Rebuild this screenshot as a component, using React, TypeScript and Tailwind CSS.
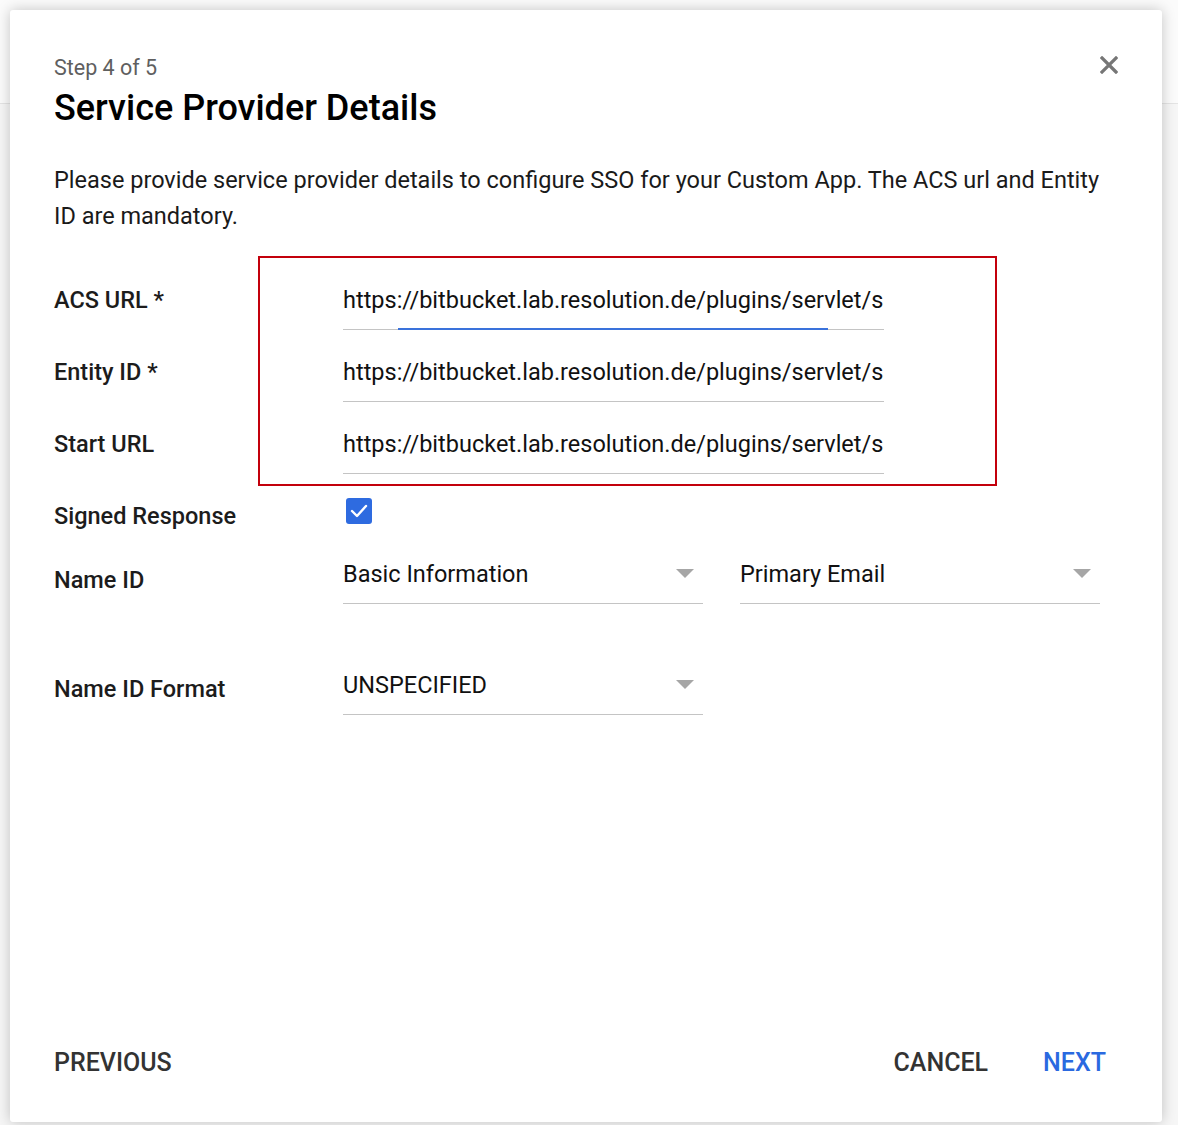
import React from 'react';

const URL_VALUE = 'https://bitbucket.lab.resolution.de/plugins/servlet/samlsso';

const TextRow: React.FC<{ label: string; value: string; focused?: boolean }> = ({ label, value, focused }) => (
  <div className="flex h-[72px] items-start">
    <div className="w-[289px] pt-[18px] text-[23.5px] leading-[36px] font-medium text-[#1c1c1c]">{label}</div>
    <div className="relative w-[541px] pt-[18px] pb-[11px] border-b border-[#c4c4c4]">
      <div className="h-[36px] overflow-hidden whitespace-nowrap text-[23.5px] leading-[36px] text-[#111]">{value}</div>
      {focused && <div className="absolute left-[55px] bottom-[-1px] w-[430px] h-[2px] bg-[#3a72db]" />}
    </div>
  </div>
);

const Arrow = () => (
  <svg width="18" height="10" viewBox="0 0 18 10" className="shrink-0">
    <path d="M0 0 L18 0 L9 9 Z" fill="#a6a6a6" />
  </svg>
);

const Select: React.FC<{ value: string }> = ({ value }) => (
  <div className="flex w-[360px] items-center justify-between pr-[9px] pb-[11px] border-b border-[#c4c4c4]">
    <span className="text-[23.5px] leading-[36px] text-[#111]">{value}</span>
    <Arrow />
  </div>
);

export default function App() {
  return (
    <div className="relative h-[1125px] w-full bg-[#f6f6f6] font-['Roboto',_'Liberation_Sans',_sans-serif] overflow-hidden">
      {/* page behind the dialog */}
      <div className="h-[104px] border-b border-[#e4e4e4] bg-[#fbfbfb]" />

      <div className="absolute left-[10px] top-[10px] flex h-[1112px] w-[1152px] flex-col rounded-[3px] bg-white px-[44px] shadow-[0_0_14px_rgba(0,0,0,0.22)]">
        {/* close */}
        <button className="absolute right-[44px] top-[46px] p-0">
          <svg width="18" height="18" viewBox="0 0 18 18">
            <path d="M2 2 L16 16 M16 2 L2 16" stroke="#767676" strokeWidth="3.2" strokeLinecap="square" />
          </svg>
        </button>

        <div className="pt-[46px] text-[21.5px] leading-[24px] text-[#5f5f5f]">Step 4 of 5</div>
        <h1 className="mt-[8px] text-[36px] leading-[40px] font-medium text-black">Service Provider Details</h1>
        <p className="mt-[34px] text-[23.5px] leading-[36px] text-[#1a1a1a]">
          Please provide service provider details to configure SSO for your Custom App. The ACS url and Entity ID are mandatory.
        </p>

        <div className="relative mt-[30px]">
          {/* highlight annotation */}
          <div className="pointer-events-none absolute left-[204px] top-[-8px] h-[230px] w-[739px] border-2 border-[#c3000c]" />

          <TextRow label="ACS URL *" value={URL_VALUE} focused />
          <TextRow label="Entity ID *" value={URL_VALUE} />
          <TextRow label="Start URL" value={URL_VALUE} />

          <div className="flex h-[72px] items-start">
            <div className="w-[289px] pt-[18px] text-[23.5px] leading-[36px] font-medium text-[#1c1c1c]">Signed Response</div>
            <div className="pt-[18px] pl-[3px]">
              <div className="flex h-[26px] w-[26px] items-center justify-center rounded-[3px] bg-[#2e6be0]">
                <svg width="18" height="14" viewBox="0 0 18 14">
                  <path d="M2 7 L7 12 L16 2" stroke="white" strokeWidth="2.4" fill="none" strokeLinecap="round" strokeLinejoin="round" />
                </svg>
              </div>
            </div>
          </div>

          <div className="flex items-start pt-[4px]">
            <div className="w-[289px] pt-[6px] text-[23.5px] leading-[36px] font-medium text-[#1c1c1c]">Name ID</div>
            <div className="flex gap-[37px]">
              <Select value="Basic Information" />
              <Select value="Primary Email" />
            </div>
          </div>

          <div className="flex items-start pt-[63px]">
            <div className="w-[289px] pt-[4px] text-[23.5px] leading-[36px] font-medium text-[#1c1c1c]">Name ID Format</div>
            <Select value="UNSPECIFIED" />
          </div>
        </div>

        <div className="mt-auto flex items-center pb-[41px]">
          <button className="text-[25px] leading-[36px] font-medium text-[#333]">PREVIOUS</button>
          <div className="ml-auto flex gap-[55px] pr-[12px]">
            <button className="text-[25px] leading-[36px] font-medium text-[#333]">CANCEL</button>
            <button className="text-[25px] leading-[36px] font-medium text-[#2a69e0]">NEXT</button>
          </div>
        </div>
      </div>
    </div>
  );
}
